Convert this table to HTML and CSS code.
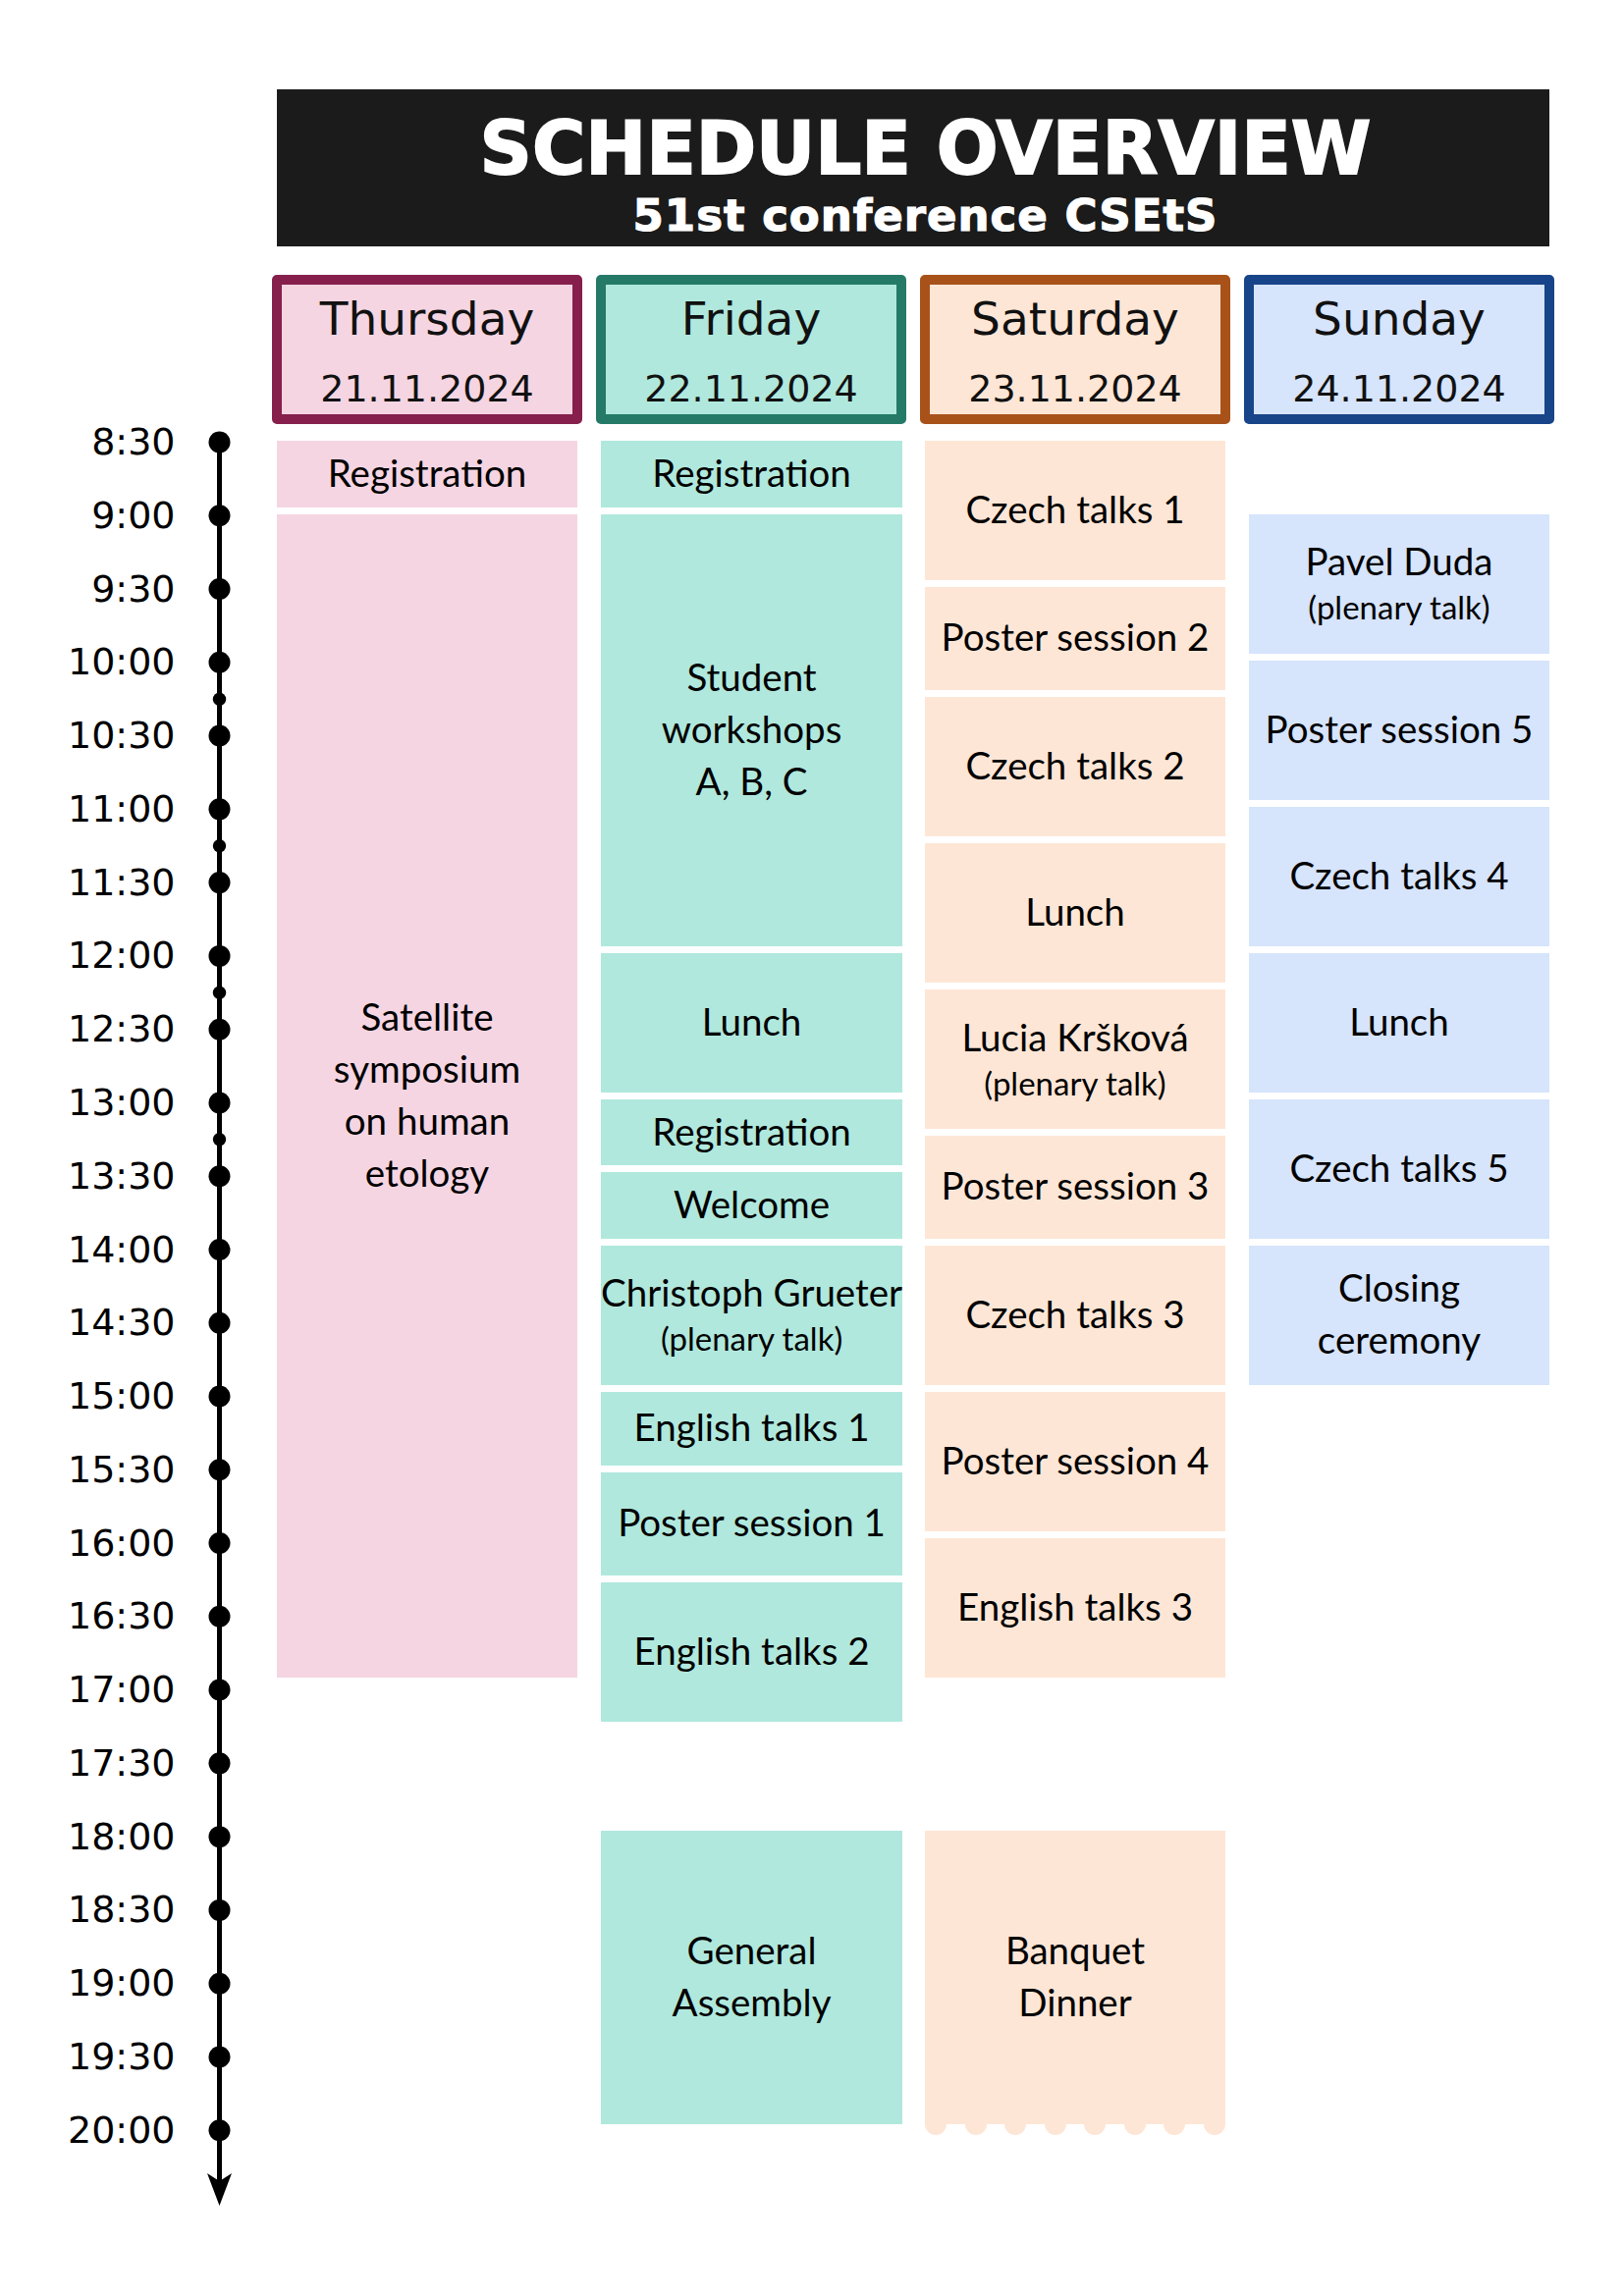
FILE: index.html
```html
<!DOCTYPE html>
<html lang="en">
<head>
<meta charset="utf-8">
<title>Schedule overview – 51st conference CSEtS</title>
<link rel="stylesheet" href="styles.css">
</head>
<body>
<main class="page">
  <header class="banner">
    <h1 class="banner-title">SCHEDULE OVERVIEW</h1>
    <p class="banner-sub">51st conference CSEtS</p>
  </header>

  <div class="day-heads">
    <div class="day-head thu"><div class="day-name">Thursday</div><div class="day-date">21.11.2024</div></div>
    <div class="day-head fri"><div class="day-name">Friday</div><div class="day-date">22.11.2024</div></div>
    <div class="day-head sat"><div class="day-name">Saturday</div><div class="day-date">23.11.2024</div></div>
    <div class="day-head sun"><div class="day-name">Sunday</div><div class="day-date">24.11.2024</div></div>
  </div>

  <div class="schedule">
    <div class="times">
      <div class="time">8:30</div>
      <div class="time">9:00</div>
      <div class="time">9:30</div>
      <div class="time">10:00</div>
      <div class="time">10:30</div>
      <div class="time">11:00</div>
      <div class="time">11:30</div>
      <div class="time">12:00</div>
      <div class="time">12:30</div>
      <div class="time">13:00</div>
      <div class="time">13:30</div>
      <div class="time">14:00</div>
      <div class="time">14:30</div>
      <div class="time">15:00</div>
      <div class="time">15:30</div>
      <div class="time">16:00</div>
      <div class="time">16:30</div>
      <div class="time">17:00</div>
      <div class="time">17:30</div>
      <div class="time">18:00</div>
      <div class="time">18:30</div>
      <div class="time">19:00</div>
      <div class="time">19:30</div>
      <div class="time">20:00</div>
    </div>

    <svg class="axis" width="103" height="1822" viewBox="0 -12 103 1822" aria-hidden="true">
      <line x1="44.5" y1="1.5" x2="44.5" y2="1776" stroke="#000" stroke-width="5"/>
      <path d="M44.5 1798 L32 1765 L44.5 1773 L57 1765 Z" fill="#000"/>
      <g fill="#000">
        <circle cx="44.5" cy="1.5" r="11"/>
        <circle cx="44.5" cy="76.27" r="11"/>
        <circle cx="44.5" cy="151.04" r="11"/>
        <circle cx="44.5" cy="225.81" r="11"/>
        <circle cx="44.5" cy="300.58" r="11"/>
        <circle cx="44.5" cy="375.35" r="11"/>
        <circle cx="44.5" cy="450.12" r="11"/>
        <circle cx="44.5" cy="524.89" r="11"/>
        <circle cx="44.5" cy="599.66" r="11"/>
        <circle cx="44.5" cy="674.43" r="11"/>
        <circle cx="44.5" cy="749.2" r="11"/>
        <circle cx="44.5" cy="823.97" r="11"/>
        <circle cx="44.5" cy="898.74" r="11"/>
        <circle cx="44.5" cy="973.51" r="11"/>
        <circle cx="44.5" cy="1048.28" r="11"/>
        <circle cx="44.5" cy="1123.05" r="11"/>
        <circle cx="44.5" cy="1197.82" r="11"/>
        <circle cx="44.5" cy="1272.59" r="11"/>
        <circle cx="44.5" cy="1347.36" r="11"/>
        <circle cx="44.5" cy="1422.13" r="11"/>
        <circle cx="44.5" cy="1496.9" r="11"/>
        <circle cx="44.5" cy="1571.67" r="11"/>
        <circle cx="44.5" cy="1646.44" r="11"/>
        <circle cx="44.5" cy="1721.21" r="11"/>
        <circle cx="44.5" cy="263.2" r="6.7"/>
        <circle cx="44.5" cy="412.7" r="6.7"/>
        <circle cx="44.5" cy="562.3" r="6.7"/>
        <circle cx="44.5" cy="711.8" r="6.7"/>
      </g>
    </svg>

    <div class="days">
      <div class="day thu">
        <div class="event" style="grid-row: 1 / 31">Registration</div>
        <div class="event" style="grid-row: 31 / 511">Satellite<br>symposium<br>on human<br>etology</div>
      </div>

      <div class="day fri">
        <div class="event" style="grid-row: 1 / 31">Registration</div>
        <div class="event" style="grid-row: 31 / 211">Student<br>workshops<br>A, B, C</div>
        <div class="event" style="grid-row: 211 / 271">Lunch</div>
        <div class="event" style="grid-row: 271 / 301">Registration</div>
        <div class="event" style="grid-row: 301 / 331">Welcome</div>
        <div class="event plenary" style="grid-row: 331 / 391"><span class="ev-main">Christoph Grueter</span><span class="ev-sub">(plenary talk)</span></div>
        <div class="event" style="grid-row: 391 / 424">English talks 1</div>
        <div class="event" style="grid-row: 424 / 469">Poster session 1</div>
        <div class="event" style="grid-row: 469 / 529">English talks 2</div>
        <div class="event" style="grid-row: 571 / 694">General<br>Assembly</div>
      </div>

      <div class="day sat">
        <div class="event" style="grid-row: 1 / 61">Czech talks 1</div>
        <div class="event" style="grid-row: 61 / 106">Poster session 2</div>
        <div class="event" style="grid-row: 106 / 166">Czech talks 2</div>
        <div class="event" style="grid-row: 166 / 226">Lunch</div>
        <div class="event plenary" style="grid-row: 226 / 286"><span class="ev-main">Lucia Kršková</span><span class="ev-sub">(plenary talk)</span></div>
        <div class="event" style="grid-row: 286 / 331">Poster session 3</div>
        <div class="event" style="grid-row: 331 / 391">Czech talks 3</div>
        <div class="event" style="grid-row: 391 / 451">Poster session 4</div>
        <div class="event" style="grid-row: 451 / 511">English talks 3</div>
        <div class="event banquet" style="grid-row: 571 / 694">Banquet<br>Dinner
          <div class="scallops"><span></span><span></span><span></span><span></span><span></span><span></span><span></span><span></span></div>
        </div>
      </div>

      <div class="day sun">
        <div class="event plenary" style="grid-row: 31 / 91"><span class="ev-main">Pavel Duda</span><span class="ev-sub">(plenary talk)</span></div>
        <div class="event" style="grid-row: 91 / 151">Poster session 5</div>
        <div class="event" style="grid-row: 151 / 211">Czech talks 4</div>
        <div class="event" style="grid-row: 211 / 271">Lunch</div>
        <div class="event" style="grid-row: 271 / 331">Czech talks 5</div>
        <div class="event" style="grid-row: 331 / 391">Closing<br>ceremony</div>
      </div>
    </div>
  </div>
</main>
</body>
</html>
```

FILE: styles.css
```css
html, body {
  margin: 0;
  padding: 0;
  background: #ffffff;
}

.page {
  width: 1654px;
  min-height: 2339px;
  padding-top: 91px;
  box-sizing: border-box;
}

/* ---------- banner ---------- */
.banner {
  margin-left: 282px;
  width: 1296px;
  height: 160px;
  box-sizing: border-box;
  padding: 23px 0 0 25px;
  background: #1b1b1b;
  color: #ffffff;
  text-align: center;
  font-family: "DejaVu Sans", Verdana, sans-serif;
  font-weight: bold;
}

.banner-title {
  margin: 0;
  font-size: 74px;
  line-height: 74px;
  font-weight: bold;
  -webkit-text-stroke: 1.8px #ffffff;
}

.banner-sub {
  margin: 9px 0 0 0;
  font-size: 45px;
  line-height: 45px;
  letter-spacing: 1px;
  -webkit-text-stroke: 1.2px #ffffff;
}

/* ---------- day headers ---------- */
.day-heads {
  display: flex;
  gap: 14px;
  margin: 29px 0 0 277px;
}

.day-head {
  width: 316px;
  height: 152px;
  box-sizing: border-box;
  border: 10px solid;
  border-radius: 5px;
  padding-top: 5px;
  text-align: center;
  color: #111111;
  font-family: "DejaVu Sans", Verdana, sans-serif;
}

.day-name {
  font-size: 47px;
  line-height: 60px;
}

.day-date {
  margin-top: 16px;
  font-size: 38px;
  line-height: 50px;
}

.thu { --fill: #f5d5e2; --edge: #861f4b; }
.fri { --fill: #b0e8dd; --edge: #247a67; }
.sat { --fill: #fee6d6; --edge: #a8521a; }
.sun { --fill: #d6e4fc; --edge: #184489; }

.day-head {
  background: var(--fill);
  border-color: var(--edge);
}

/* ---------- schedule ---------- */
.schedule {
  display: flex;
  align-items: flex-start;
  margin-top: 17px;
}

.times {
  width: 178.5px;
  margin-top: -35.9px;
  display: flex;
  flex-direction: column;
  font-family: "DejaVu Sans", Verdana, sans-serif;
  font-size: 38px;
  color: #000000;
  text-align: right;
}

.time {
  height: 74.77px;
  line-height: 74.77px;
}

.axis {
  display: block;
  flex: none;
  margin-left: 0.5px;
  margin-top: -12px;
}

.days {
  display: grid;
  grid-template-columns: repeat(4, 306px);
  column-gap: 24px;
}

.day {
  display: grid;
  grid-template-rows: repeat(693, 2.4923px);
}

.event {
  position: relative;
  display: flex;
  flex-direction: column;
  align-items: center;
  justify-content: center;
  margin-bottom: 7px;
  padding-bottom: 3px;
  box-sizing: border-box;
  background: var(--fill);
  color: #000000;
  text-align: center;
  white-space: nowrap;
  font-family: Lato, "Open Sans", sans-serif;
  font-size: 38.5px;
  line-height: 53px;
}

.ev-main {
  display: block;
  line-height: 50px;
}

.ev-sub {
  display: block;
  font-size: 33px;
  line-height: 44px;
}

.scallops {
  position: absolute;
  left: 0;
  right: 0;
  top: 100%;
  display: flex;
  justify-content: space-between;
}

.scallops span {
  width: 22px;
  height: 12px;
  margin-top: -1px;
  border-radius: 0 0 11px 11px;
  background: var(--fill);
}
```
